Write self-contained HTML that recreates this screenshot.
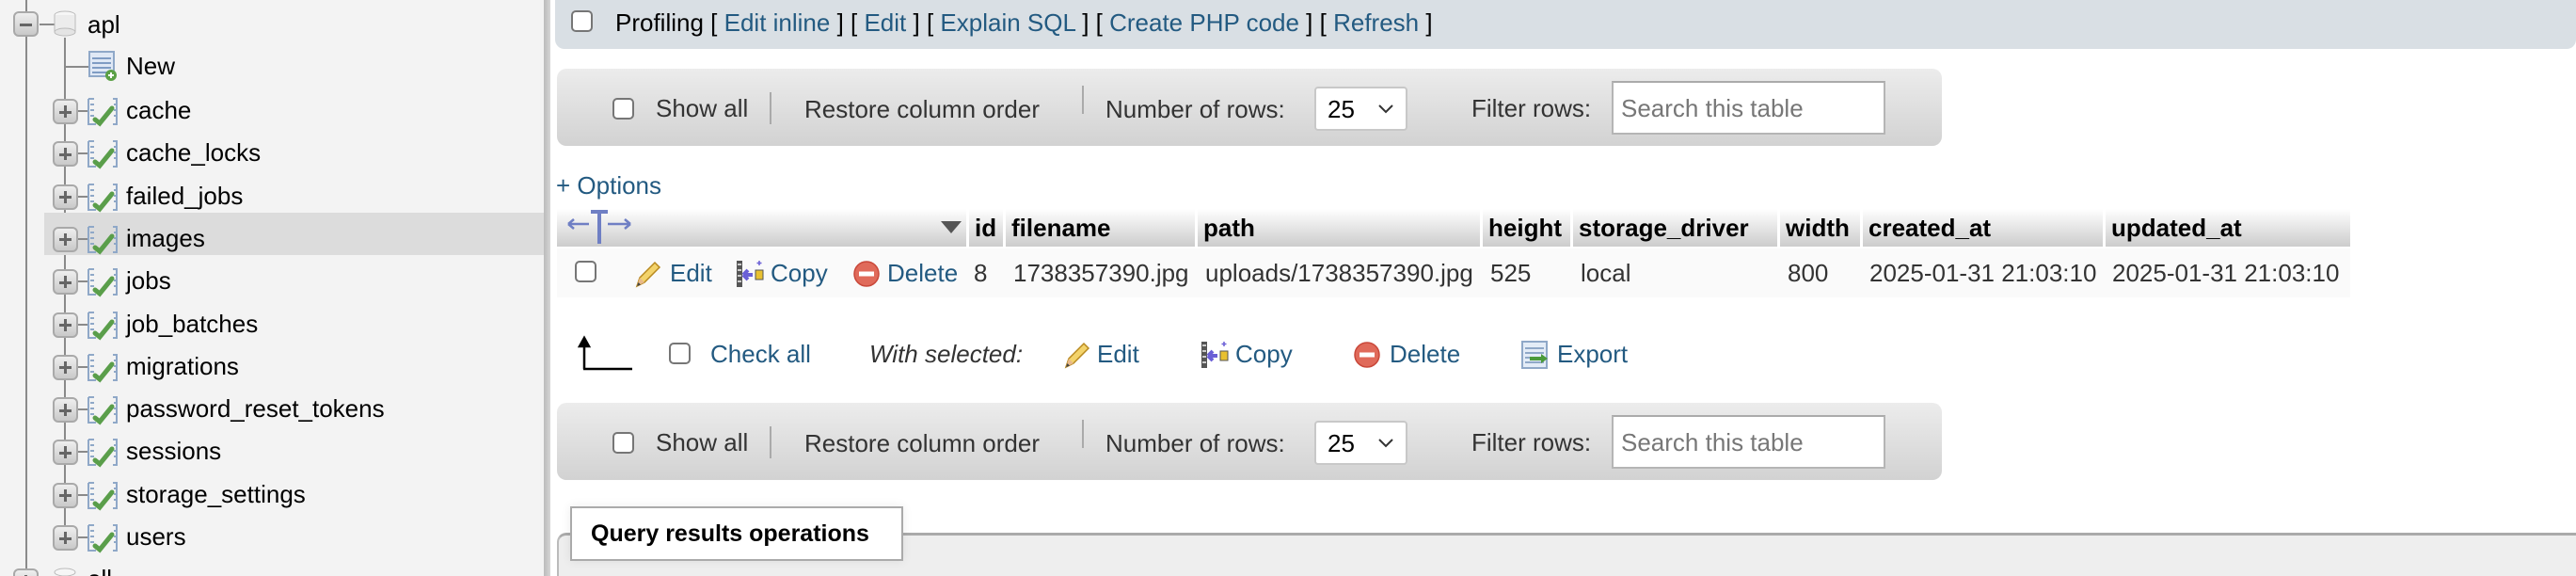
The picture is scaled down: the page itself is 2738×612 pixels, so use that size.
<!DOCTYPE html>
<html><head><meta charset="utf-8"><style>
*{box-sizing:border-box;margin:0;padding:0}
html,body{width:2738px;height:612px;overflow:hidden}
body{background:#fff;font-family:"Liberation Sans",Arial,sans-serif;font-size:26px;position:relative;color:#333}
.a{position:absolute;white-space:nowrap}
#side{position:absolute;left:0;top:0;width:578px;height:612px;background:#f3f3f3;overflow:hidden}
#sep{position:absolute;left:578px;top:0;width:7px;height:612px;background:linear-gradient(90deg,#bbb,#d6d6d6)}
.vl{position:absolute;width:2px;background:#8a8a8a}
.hl{position:absolute;height:2px;background:#8a8a8a}
.pb{position:absolute;width:27px;height:27px;border:2px solid #a9a9a9;border-radius:6px;background:linear-gradient(#eee,#c9c9c9)}
.pb:before{content:"";position:absolute;left:5px;top:10.5px;width:13px;height:3px;background:#666}
.pb.p:after{content:"";position:absolute;left:10px;top:5px;width:3px;height:13px;background:#666}
.st{position:absolute;left:134px;color:#000;font-size:26px}
.lk{color:#235a81}
.cb{position:absolute;width:23px;height:23px;border:2px solid #767676;border-radius:5px;background:#fff}
.bar{position:absolute;left:592px;width:1472px;height:82px;border-radius:10px;background:linear-gradient(#ececec,#d2d2d2);color:#333}
.sel{position:absolute;width:99px;height:47px;background:#fff;border:2px solid #c8c8c8;border-radius:4px}
.inp{position:absolute;width:291px;height:57px;background:#fff;border:2px solid #b5b5b5;border-top-color:#aaa}
.hd{position:absolute;top:222px;height:40px;background:linear-gradient(#fff,#ccc);color:#000;font-weight:bold;border-right:3px solid #fff;line-height:40px;padding-left:6px}
#main{position:absolute;left:0;top:0;width:2738px;height:612px;overflow:hidden}
</style></head><body>
<div id="side">
 <div class="vl" style="left:27px;top:0;height:612px"></div>
 <div class="vl" style="left:68px;top:40px;height:534px"></div>
 <div style="position:absolute;left:47px;top:226px;width:531px;height:45px;background:#dcdcdc"></div>
 <div class="pb" style="left:14px;top:12px"></div>
 <div class="hl" style="left:42px;top:25px;width:16px"></div>
 <svg class="a" style="left:56px;top:10px" width="26" height="30"><ellipse cx="13" cy="6" rx="11" ry="4" fill="#f6f6f6" stroke="#bbb"/><rect x="2" y="6" width="22" height="18" fill="#ececec" stroke="none"/><path d="M2 6v18M24 6v18" stroke="#bbb"/><ellipse cx="13" cy="24" rx="11" ry="4" fill="#e4e4e4" stroke="#bbb"/></svg>
 <div class="a" style="left:93px;top:11px;color:#000">apl</div>
 <div class="hl" style="left:68px;top:70px;width:26px"></div>
 <svg class="a" style="left:94px;top:54px" width="32" height="32"><rect x="1" y="1" width="26" height="26" fill="#dfe8f5" stroke="#8fa8c8" stroke-width="2"/><path d="M4 8h20M4 13h20M4 18h20M4 23h20" stroke="#7f9cc4" stroke-width="2"/><circle cx="24" cy="26" r="6" fill="#5aa045"/><path d="M21 26h6M24 23v6" stroke="#fff" stroke-width="2"/></svg>
 <div class="st" style="top:55px">New</div>
 <div id="rows"></div>
 <div class="pb p" style="left:14px;top:604px"></div>
 <svg class="a" style="left:56px;top:602px" width="26" height="20"><ellipse cx="13" cy="6" rx="11" ry="4" fill="#f6f6f6" stroke="#bbb"/></svg>
 <div class="a" style="left:93px;top:600px;color:#000">oll</div>
</div>
<div id="sep"></div>
<div id="main">
<div style="position:absolute;left:590px;top:-10px;width:2148px;height:62px;background:#d9dfe4;border-radius:10px"></div>
<div class="cb" style="left:607px;top:11px"></div>
<div class="a" style="left:654px;top:9px;color:#000">Profiling [ <span class="lk">Edit inline</span> ] [ <span class="lk">Edit</span> ] [ <span class="lk">Explain SQL</span> ] [ <span class="lk">Create PHP code</span> ] [ <span class="lk">Refresh</span> ]</div>

<div id="bars"></div>

<div class="a lk" style="left:591px;top:182px">+ Options</div>
<div class="hd" style="left:592px;width:438px"></div>
<svg class="a" style="left:600px;top:220px" width="100" height="44"><path d="M4 18h22M4 18l6-5M4 18l6 5M46 18h24M70 18l-6-5M70 18l-6 5" stroke="#6f7fc4" stroke-width="2.5" fill="none"/><path d="M28 5h18M37 5v34" stroke="#6f7fc4" stroke-width="4"/></svg>
<svg class="a" style="left:999px;top:234px" width="24" height="16"><path d="M1 1h22L12 14z" fill="#555"/></svg>
<div class="hd" style="left:1030px;width:39px">id</div>
<div class="hd" style="left:1069px;width:204px">filename</div>
<div class="hd" style="left:1273px;width:303px">path</div>
<div class="hd" style="left:1576px;width:96px">height</div>
<div class="hd" style="left:1672px;width:220px">storage_driver</div>
<div class="hd" style="left:1892px;width:88px">width</div>
<div class="hd" style="left:1980px;width:258px">created_at</div>
<div class="hd" style="left:2238px;width:260px;border-right:none">updated_at</div>

<div style="position:absolute;left:592px;top:264px;width:1906px;height:52px;background:#fafafa"></div>
<div class="cb" style="left:611px;top:277px"></div>
<svg class="a" style="left:672px;top:275px" width="32" height="32"><path d="M5 29l3-9L24 4l5 5L13 25z" fill="#f3d36b" stroke="#b8891f" stroke-width="1.5"/><path d="M5 29l3-9 5 5z" fill="#e8b98a"/><path d="M5 29l1.5-4 2.5 2.5z" fill="#444"/></svg>
<div class="a lk" style="left:712px;top:275px">Edit</div>
<svg class="a" style="left:782px;top:275px" width="32" height="32"><rect x="1" y="2" width="6" height="28" fill="#555"/><path d="M2 6h4M2 12h4M2 18h4M2 24h4" stroke="#ccc" stroke-width="2"/><path d="M8 17h10M8 17l5-5M8 17l5 5" stroke="#6a5fd6" stroke-width="4"/><rect x="21" y="12" width="8" height="10" fill="#e8c030" stroke="#555"/><path d="M25 2v5M22.5 4.5h5" stroke="#6a5fd6" stroke-width="1.5"/></svg>
<div class="a lk" style="left:819px;top:275px">Copy</div>
<svg class="a" style="left:906px;top:276px" width="30" height="30"><circle cx="15" cy="15" r="13" fill="#e06a5a" stroke="#c9483a" stroke-width="1.5"/><rect x="7" y="12.5" width="16" height="5" fill="#fff"/></svg>
<div class="a lk" style="left:943px;top:275px">Delete</div>
<div class="a" style="left:1035px;top:275px">8</div>
<div class="a" style="left:1077px;top:275px">1738357390.jpg</div>
<div class="a" style="left:1281px;top:275px">uploads/1738357390.jpg</div>
<div class="a" style="left:1584px;top:275px">525</div>
<div class="a" style="left:1680px;top:275px">local</div>
<div class="a" style="left:1900px;top:275px">800</div>
<div class="a" style="left:1987px;top:275px">2025-01-31 21:03:10</div>
<div class="a" style="left:2245px;top:275px">2025-01-31 21:03:10</div>

<svg class="a" style="left:612px;top:356px" width="64" height="40"><path d="M9 36V4M9 3l-5 9h10z" stroke="#000" stroke-width="2.5" fill="#000"/><path d="M8 36h52" stroke="#000" stroke-width="2.5"/></svg>
<div class="cb" style="left:711px;top:364px"></div>
<div class="a lk" style="left:755px;top:361px">Check all</div>
<div class="a" style="left:924px;top:361px;font-style:italic">With selected:</div>
<svg class="a" style="left:1128px;top:361px" width="32" height="32"><path d="M5 29l3-9L24 4l5 5L13 25z" fill="#f3d36b" stroke="#b8891f" stroke-width="1.5"/><path d="M5 29l3-9 5 5z" fill="#e8b98a"/><path d="M5 29l1.5-4 2.5 2.5z" fill="#444"/></svg>
<div class="a lk" style="left:1166px;top:361px">Edit</div>
<svg class="a" style="left:1276px;top:361px" width="32" height="32"><rect x="1" y="2" width="6" height="28" fill="#555"/><path d="M2 6h4M2 12h4M2 18h4M2 24h4" stroke="#ccc" stroke-width="2"/><path d="M8 17h10M8 17l5-5M8 17l5 5" stroke="#6a5fd6" stroke-width="4"/><rect x="21" y="12" width="8" height="10" fill="#e8c030" stroke="#555"/><path d="M25 2v5M22.5 4.5h5" stroke="#6a5fd6" stroke-width="1.5"/></svg>
<div class="a lk" style="left:1313px;top:361px">Copy</div>
<svg class="a" style="left:1438px;top:362px" width="30" height="30"><circle cx="15" cy="15" r="13" fill="#e06a5a" stroke="#c9483a" stroke-width="1.5"/><rect x="7" y="12.5" width="16" height="5" fill="#fff"/></svg>
<div class="a lk" style="left:1477px;top:361px">Delete</div>
<svg class="a" style="left:1616px;top:361px" width="32" height="32"><rect x="2" y="2" width="26" height="28" fill="#e3ecf7" stroke="#8fa8c8" stroke-width="2"/><path d="M5 9h20M5 14h20M5 19h20M5 24h20" stroke="#8fa8c8" stroke-width="2"/><path d="M10 20h14" stroke="#4a9a3a" stroke-width="4"/><path d="M22 15l7 5-7 5z" fill="#4a9a3a"/></svg>
<div class="a lk" style="left:1655px;top:361px">Export</div>

<div style="position:absolute;left:592px;top:566px;width:2146px;height:60px;background:#eee;border-top:3px solid #aaa;border-left:2px solid #bbb;border-radius:10px 0 0 0"></div>
<div style="position:absolute;left:606px;top:538px;width:354px;height:58px;background:#fff;border:2px solid #aaa;box-shadow:0 0 10px rgba(0,0,0,.08)"></div>
<div class="a" style="left:628px;top:553px;font-weight:bold;color:#000;font-size:25px">Query results operations</div>
</div>
<script>
var names=["cache","cache_locks","failed_jobs","images","jobs","job_batches","migrations","password_reset_tokens","sessions","storage_settings","users"];
var h="";
names.forEach(function(n,i){var y=118+i*45.3;
h+='<div class="pb p" style="left:56px;top:'+(y-13)+'px"></div>';
h+='<div class="hl" style="left:83px;top:'+(y-1)+'px;width:10px"></div>';
h+='<svg class="a" style="left:92px;top:'+(y-15)+'px" width="34" height="32"><path d="M2 2v27h8M2 2h6M4 8h4M4 14h4M4 20h4M28 2h4v27h-4M29 8h2M29 14h2M29 20h2" stroke="#8fa8c8" stroke-width="2" fill="none"/><path d="M9 24l5 4 13-16" stroke="#5a9e4a" stroke-width="5" fill="none" stroke-linecap="round"/></svg>';
h+='<div class="st" style="top:'+(y-16)+'px">'+n+'</div>';});
document.getElementById("rows").innerHTML=h;
var b="";
[73,428].forEach(function(t){
b+='<div class="bar" style="top:'+t+'px"></div>';
b+='<div class="cb" style="left:651px;top:'+(t+31)+'px"></div>';
b+='<div class="a" style="left:697px;top:'+(t+27)+'px">Show all</div>';
b+='<div style="position:absolute;left:818px;top:'+(t+25)+'px;width:2px;height:34px;background:#aaa"></div>';
b+='<div class="a" style="left:855px;top:'+(t+28)+'px">Restore column order</div>';
b+='<div style="position:absolute;left:1150px;top:'+(t+18)+'px;width:2px;height:30px;background:#aaa"></div>';
b+='<div class="a" style="left:1175px;top:'+(t+28)+'px">Number of rows:</div>';
b+='<div class="sel" style="left:1397px;top:'+(t+19)+'px"></div>';
b+='<div class="a" style="left:1411px;top:'+(t+28)+'px;color:#000">25</div>';
b+='<svg class="a" style="left:1465px;top:'+(t+38)+'px" width="16" height="10"><path d="M1 1l7 7 7-7" stroke="#333" stroke-width="2" fill="none"/></svg>';
b+='<div class="a" style="left:1564px;top:'+(t+27)+'px">Filter rows:</div>';
b+='<div class="inp" style="left:1713px;top:'+(t+13)+'px"></div>';
b+='<div class="a" style="left:1723px;top:'+(t+27)+'px;color:#777">Search this table</div>';});
document.getElementById("bars").innerHTML=b;
</script>
</body></html>
